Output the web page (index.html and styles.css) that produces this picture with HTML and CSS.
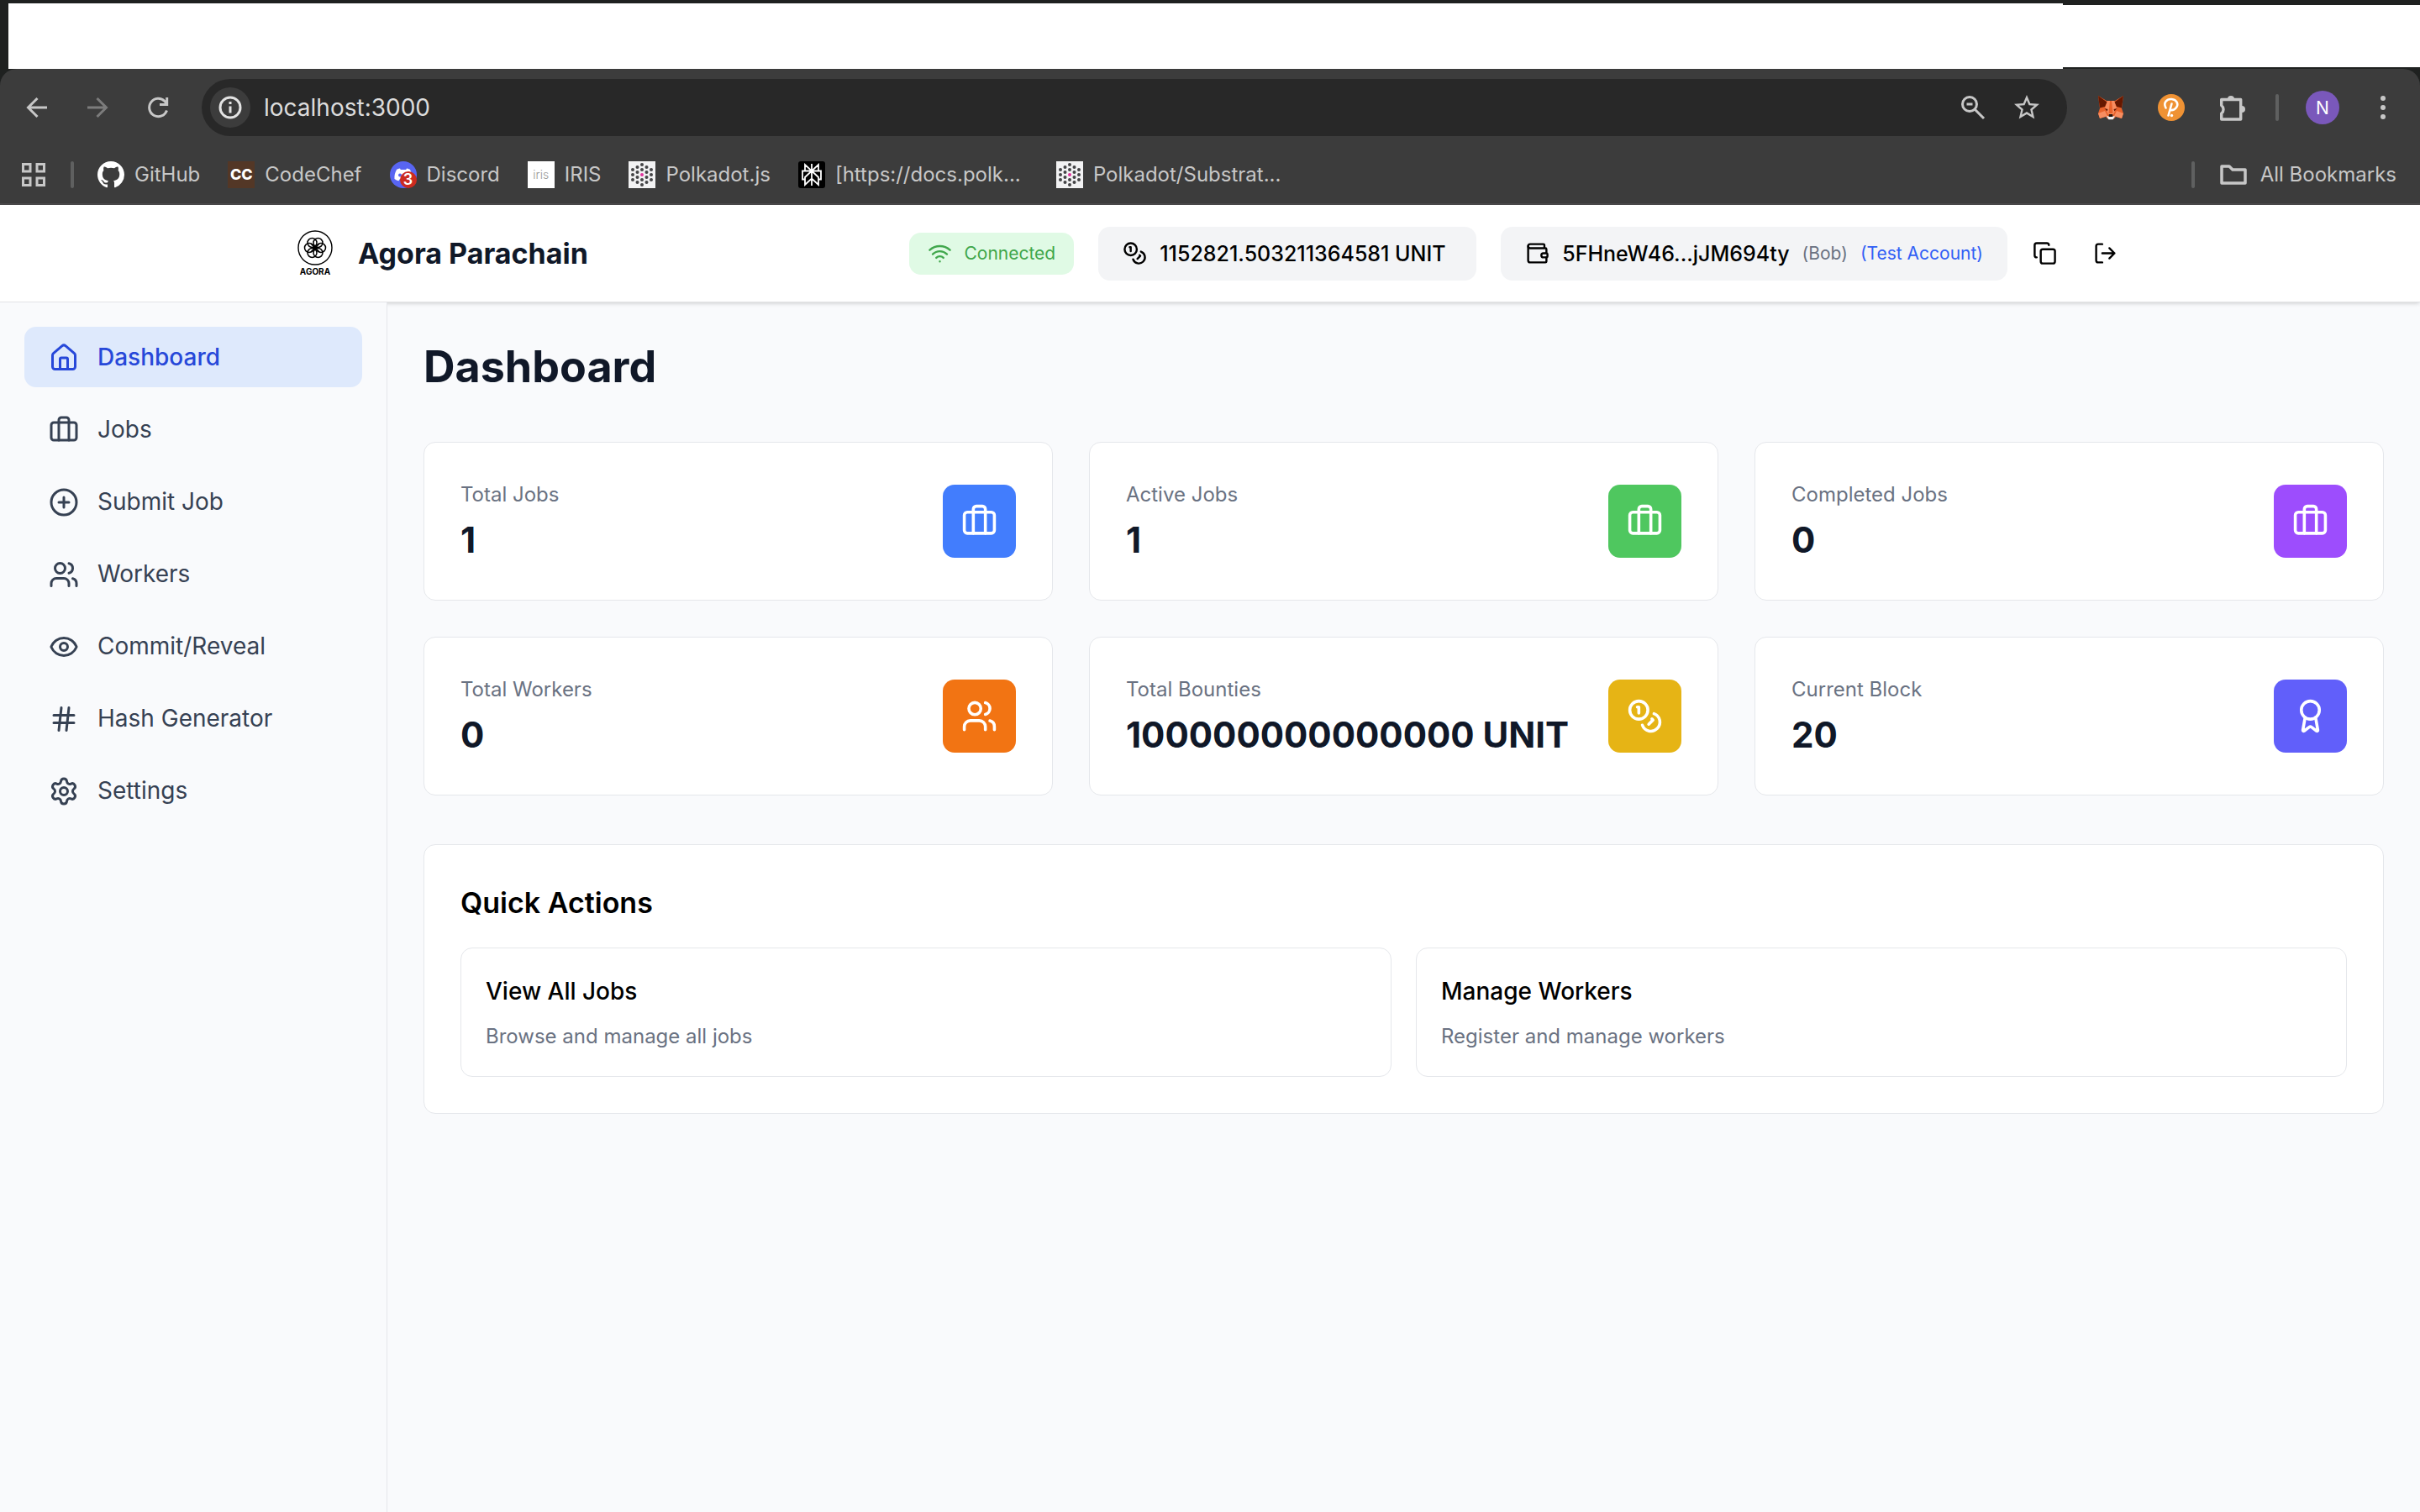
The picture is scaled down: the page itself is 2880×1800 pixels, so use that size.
FILE: index.html
```html
<!DOCTYPE html>
<html lang="en">
<head>
<meta charset="utf-8">
<title>Agora Parachain</title>
<link rel="stylesheet" href="styles.css">
</head>
<body>
<svg class="sprite" aria-hidden="true">
  <symbol id="i-home" viewBox="0 0 24 24"><path d="M15 21v-8a1 1 0 0 0-1-1h-4a1 1 0 0 0-1 1v8"/><path d="M3 10a2 2 0 0 1 .709-1.528l7-5.999a2 2 0 0 1 2.582 0l7 5.999A2 2 0 0 1 21 10v9a2 2 0 0 1-2 2H5a2 2 0 0 1-2-2z"/></symbol>
  <symbol id="i-briefcase" viewBox="0 0 24 24"><path d="M16 20V4a2 2 0 0 0-2-2h-4a2 2 0 0 0-2 2v16"/><rect width="20" height="14" x="2" y="6" rx="2"/></symbol>
  <symbol id="i-plus" viewBox="0 0 24 24"><circle cx="12" cy="12" r="10"/><path d="M8 12h8M12 8v8"/></symbol>
  <symbol id="i-users" viewBox="0 0 24 24"><path d="M16 21v-2a4 4 0 0 0-4-4H6a4 4 0 0 0-4 4v2"/><circle cx="9" cy="7" r="4"/><path d="M22 21v-2a4 4 0 0 0-3-3.87M16 3.13a4 4 0 0 1 0 7.75"/></symbol>
  <symbol id="i-eye" viewBox="0 0 24 24"><path d="M2.062 12.348a1 1 0 0 1 0-.696 10.75 10.75 0 0 1 19.876 0 1 1 0 0 1 0 .696 10.75 10.75 0 0 1-19.876 0"/><circle cx="12" cy="12" r="3"/></symbol>
  <symbol id="i-hash" viewBox="0 0 24 24"><path d="M4 9h16M4 15h16M10 3 8 21M16 3l-2 18"/></symbol>
  <symbol id="i-settings" viewBox="0 0 24 24"><path d="M9.671 4.136a2.34 2.34 0 0 1 4.659 0 2.34 2.34 0 0 0 3.319 1.915 2.34 2.34 0 0 1 2.33 4.033 2.34 2.34 0 0 0 0 3.831 2.34 2.34 0 0 1-2.33 4.033 2.34 2.34 0 0 0-3.319 1.915 2.34 2.34 0 0 1-4.659 0 2.34 2.34 0 0 0-3.32-1.915 2.34 2.34 0 0 1-2.33-4.033 2.34 2.34 0 0 0 0-3.831A2.34 2.34 0 0 1 6.35 6.051a2.34 2.34 0 0 0 3.319-1.915"/><circle cx="12" cy="12" r="3"/></symbol>
  <symbol id="i-coins" viewBox="0 0 24 24"><circle cx="8" cy="8" r="6"/><path d="M18.09 10.37A6 6 0 1 1 10.34 18M7 6h1v4M16.71 13.88l.7.71-2.82 2.82"/></symbol>
  <symbol id="i-award" viewBox="0 0 24 24"><path d="m15.477 12.89 1.515 8.526a.5.5 0 0 1-.81.47l-3.58-2.687a1 1 0 0 0-1.197 0l-3.586 2.686a.5.5 0 0 1-.81-.469l1.514-8.526"/><circle cx="12" cy="8" r="6"/></symbol>
  <symbol id="i-wifi" viewBox="0 0 24 24"><path d="M12 20h.01M2 8.82a15 15 0 0 1 20 0M5 12.859a10 10 0 0 1 14 0M8.5 16.429a5 5 0 0 1 7 0"/></symbol>
  <symbol id="i-wallet" viewBox="0 0 24 24"><path d="M19 7V4a1 1 0 0 0-1-1H5a2 2 0 0 0 0 4h15a1 1 0 0 1 1 1v4h-3a2 2 0 0 0 0 4h3a1 1 0 0 0 1-1v-2a1 1 0 0 0-1-1"/><path d="M3 5v14a2 2 0 0 0 2 2h15a1 1 0 0 0 1-1v-4"/></symbol>
  <symbol id="i-copy" viewBox="0 0 24 24"><rect width="14" height="14" x="8" y="8" rx="2"/><path d="M4 16c-1.1 0-2-.9-2-2V4c0-1.1.9-2 2-2h10c1.1 0 2 .9 2 2"/></symbol>
  <symbol id="i-logout" viewBox="0 0 24 24"><path d="m16 17 5-5-5-5M21 12H9M9 21H5a2 2 0 0 1-2-2V5a2 2 0 0 1 2-2h4"/></symbol>
  <symbol id="i-dots" viewBox="0 0 32 32"><path fill="#f2f2f3" d="M0 0h32v32H0z"/><g fill="#444446"><circle cx="16" cy="4" r="2"/><circle cx="10.500" cy="7" r="2"/><circle cx="21.500" cy="7" r="2"/><circle cx="5" cy="10" r="2"/><circle cx="16" cy="10" r="2"/><circle cx="27" cy="10" r="2"/><circle cx="10.500" cy="13" r="2"/><circle cx="21.500" cy="13" r="2"/><circle cx="5" cy="16" r="2"/><circle cx="27" cy="16" r="2"/><circle cx="10.500" cy="19" r="2"/><circle cx="21.500" cy="19" r="2"/><circle cx="5" cy="22" r="2"/><circle cx="16" cy="22" r="2"/><circle cx="27" cy="22" r="2"/><circle cx="10.500" cy="25" r="2"/><circle cx="21.500" cy="25" r="2"/><circle cx="16" cy="28" r="2"/></g><circle cx="16" cy="16" r="2" fill="#e0339c"/></symbol>
</svg>

<div class="browser">
  <div class="tabstrip"><div class="tabs"></div><div class="tabs-end"></div></div>
  <div class="chrome">
    <div class="toolbar">
      <div class="nav-buttons">
        <button class="tool" aria-label="Back"><svg class="tool-icon" viewBox="0 0 32 32"><path d="M28 16H6M16.500 5 5.500 16l11 11"/></svg></button>
        <button class="tool dim" aria-label="Forward"><svg class="tool-icon" viewBox="0 0 32 32"><path d="M4 16h22M15.500 5l11 11-11 11"/></svg></button>
        <button class="tool" aria-label="Reload"><svg class="tool-icon" viewBox="0 0 32 32"><path d="M26.500 19.500A10.700 10.700 0 1 1 24 8.500l2.500 3M26.700 4v8.500H18"/></svg></button>
      </div>
      <div class="address">
        <button class="site-info" aria-label="Site information"><svg class="tool-icon" viewBox="0 0 32 32"><circle cx="16" cy="16" r="12"/><path d="M16 14.500v8M16 9v3"/></svg></button>
        <input class="url" type="text" value="localhost:3000" aria-label="Address">
        <button class="address-tool" aria-label="Zoom"><svg class="tool-icon" viewBox="0 0 32 32"><circle cx="12" cy="12" r="8.500"/><path d="m18 18 11 11M8.500 12h7"/></svg></button>
        <button class="address-tool" aria-label="Bookmark this tab"><svg class="star" viewBox="0 0 24 24"><path d="M22 9.240l-7.190-.62L12 2 9.190 8.630 2 9.240l5.460 4.730L5.820 21 12 17.270 18.180 21l-1.630-7.030L22 9.240zM12 15.400l-3.760 2.270 1-4.280-3.320-2.880 4.380-.38L12 6.100l1.710 4.040 4.380.38-3.320 2.880 1 4.280L12 15.400z"/></svg></button>
      </div>
      <div class="nav-buttons">
        <button class="tool" aria-label="MetaMask"><svg class="ext" viewBox="0 0 32 32"><path fill="#e8622b" d="M1 2l10 6h10l10-6-2 15 2 6-2 6-7-2-3 3h-6l-3-3-7 2-2-6 2-6z"/><path fill="#661800" d="M1 2 11.500 9.500 9 15l-6 1.500zM31 2 20.500 9.500 23 15l6 1.500z"/><path fill="#f78d60" d="M12 8h8l3 9-4 7h-6l-4-7zM1 23l8-3 3 6-9 3zM31 23l-8-3-3 6 9 3z"/><path fill="#e8622b" d="M15 8h2l1.500 15h-5z"/><path fill="#661800" d="m8.500 17 4 1-1 2.500zM23.500 17l-4 1 1 2.500z"/><path fill="#f0f0f0" d="m11 26.500 3-.5h4l3 .5-2.500 3.800h-5z"/><path fill="#26150e" d="M14 24h4l.5 3h-5z"/></svg></button>
        <button class="tool" aria-label="Wallet extension"><svg class="ext" viewBox="0 0 32 32"><circle cx="16" cy="16" r="16" fill="#ef9234"/><path fill="none" stroke="#fff" stroke-width="2.600" stroke-linecap="round" d="M9.500 16.500C6 10 11 5.500 16.500 6c6 .5 8.500 6 5.500 10-1.800 2.600-4.500 3.500-7.500 3M16.500 11.500 12.500 25.500"/><circle cx="16.500" cy="25.500" r="1.700" fill="#fff"/></svg></button>
        <button class="tool" aria-label="Extensions"><svg class="ext" viewBox="0 0 32 32"><path fill="none" stroke="#c7c7c7" stroke-width="3.400" stroke-linejoin="round" d="M3.700 6.500h23v23.500h-23v-7a6 6 0 0 0 0-9.500z"/><path fill="#c7c7c7" d="M11 6a4 4 0 0 1 8 0zM28 14a4 4 0 0 1 0 8z"/></svg></button>
        <span class="divider"></span>
        <button class="tool" aria-label="Profile"><span class="avatar">N</span></button>
        <button class="tool" aria-label="Menu"><svg class="ext" viewBox="0 0 32 32"><g fill="#c7c7c7"><circle cx="16" cy="5" r="3"/><circle cx="16" cy="16" r="3"/><circle cx="16" cy="27" r="3"/></g></svg></button>
      </div>
    </div>
    <nav class="bookmarks" aria-label="Bookmarks">
      <button class="apps" aria-label="Tab groups"><svg class="tool-icon" viewBox="0 0 32 32"><path d="M3.500 3.500h8.500v8.500H3.500zM20 3.500h8.500v8.500H20zM3.500 20h8.500v8.500H3.500zM20 20h8.500v8.500H20z"/></svg></button>
      <span class="divider"></span>
      <a class="bookmark" href="#"><svg class="ext" viewBox="0 0 16 16"><path fill="#fff" d="M8 0C3.580 0 0 3.580 0 8c0 3.540 2.290 6.530 5.470 7.590.4.070.55-.17.55-.38 0-.19-.01-.82-.01-1.490-2.010.37-2.530-.49-2.690-.94-.09-.23-.48-.94-.82-1.130-.28-.15-.68-.52-.01-.53.63-.01 1.080.58 1.230.82.72 1.210 1.870.87 2.330.66.070-.52.28-.87.51-1.070-1.780-.2-3.640-.89-3.640-3.950 0-.87.31-1.590.82-2.150-.08-.2-.36-1.020.08-2.120 0 0 .67-.21 2.200.82.64-.18 1.320-.27 2-.27.68 0 1.360.09 2 .27 1.530-1.040 2.200-.82 2.200-.82.44 1.100.16 1.920.08 2.120.51.56.82 1.270.82 2.150 0 3.070-1.870 3.750-3.650 3.950.29.25.54.73.54 1.480 0 1.070-.01 1.930-.01 2.200 0 .21.15.46.55.38A8.013 8.013 0 0 0 16 8c0-4.420-3.580-8-8-8z"/></svg><span>GitHub</span></a>
      <a class="bookmark" href="#"><span class="favicon codechef" aria-hidden="true">CC</span><span>CodeChef</span></a>
      <a class="bookmark" href="#"><span class="favicon discord"><svg class="ext" viewBox="0 0 32 32"><circle cx="16" cy="16" r="16" fill="#5865f2"/><path fill="#fff" d="M12 8.500c-2 .3-3.500 1-4 1.500-2 3.500-2.800 7-2.500 11 1.500 1.200 3.300 2 5 2.300l1.200-2h8.600l1.200 2c1.700-.3 3.500-1.100 5-2.300.3-4-.5-7.500-2.500-11-.5-.5-2-1.200-4-1.500l-.8 1.500h-6.400z"/><circle cx="12" cy="16.500" r="2" fill="#5865f2"/></svg><span class="count">3</span></span><span>Discord</span></a>
      <a class="bookmark" href="#"><span class="favicon iris" aria-hidden="true">iris</span><span>IRIS</span></a>
      <a class="bookmark" href="#"><svg class="ext"><use href="#i-dots"/></svg><span>Polkadot.js</span></a>
      <a class="bookmark" href="#"><svg class="ext" viewBox="0 0 32 32"><rect width="32" height="32" rx="3"/><path fill="none" stroke="#fff" stroke-width="1.800" d="M16 3v26M8 4v7.500h16V4l-8 7.500zM16 11.500l-8 7.500v9l8-7.500 8 7.500v-9zM8 21.500H5v-10h22v10h-3"/></svg><span class="clipped">[https://docs.polk...</span></a>
      <a class="bookmark" href="#"><svg class="ext"><use href="#i-dots"/></svg><span>Polkadot/Substrat...</span></a>
      <span class="divider push"></span>
      <a class="bookmark all" href="#"><svg class="ext" viewBox="0 0 32 32"><path fill="none" stroke="#c7c7c7" stroke-width="3.500" stroke-linejoin="round" d="M2 6h9l4 4h15v16H2z"/></svg><span>All Bookmarks</span></a>
    </nav>
  </div>
</div>

<header class="header">
  <div class="header-inner">
    <div class="brand">
      <svg class="logo" viewBox="0 0 58 58" role="img" aria-label="Agora">
        <g fill="none" stroke="#000">
          <circle cx="29" cy="22" r="20" stroke-width="1.400"/>
          <g stroke-width="1.500"><circle cx="36" cy="22" r="5.500"/><circle cx="32.500" cy="28" r="5.500"/><circle cx="25.500" cy="28" r="5.500"/><circle cx="22" cy="22" r="5.500"/><circle cx="25.500" cy="16" r="5.500"/><circle cx="32.500" cy="16" r="5.500"/><path d="m24 17 10 10M34 17 24 27"/></g>
        </g>
        <text class="logo-text" x="29" y="54" text-anchor="middle">AGORA</text>
      </svg>
      <span class="brand-name">Agora Parachain</span>
    </div>
    <div class="account">
      <div class="status"><svg class="icon-sm"><use href="#i-wifi"/></svg><span>Connected</span></div>
      <div class="pill balance"><svg class="icon-sm"><use href="#i-coins"/></svg><span>1152821.503211364581 UNIT</span></div>
      <div class="pill"><svg class="icon-sm"><use href="#i-wallet"/></svg><span>5FHneW46...jJM694ty</span><span class="owner">(Bob)</span><span class="owner test">(Test Account)</span></div>
      <div class="actions">
        <button class="icon-button" aria-label="Copy address"><svg class="icon-sm"><use href="#i-copy"/></svg></button>
        <button class="icon-button" aria-label="Disconnect"><svg class="icon-sm"><use href="#i-logout"/></svg></button>
      </div>
    </div>
  </div>
</header>

<div class="layout">
  <aside class="sidebar">
    <nav class="menu" aria-label="Main">
      <a class="menu-item active" href="#" aria-current="page"><svg class="icon-md"><use href="#i-home"/></svg><span>Dashboard</span></a>
      <a class="menu-item" href="#"><svg class="icon-md"><use href="#i-briefcase"/></svg><span>Jobs</span></a>
      <a class="menu-item" href="#"><svg class="icon-md"><use href="#i-plus"/></svg><span>Submit Job</span></a>
      <a class="menu-item" href="#"><svg class="icon-md"><use href="#i-users"/></svg><span>Workers</span></a>
      <a class="menu-item" href="#"><svg class="icon-md"><use href="#i-eye"/></svg><span>Commit/Reveal</span></a>
      <a class="menu-item" href="#"><svg class="icon-md"><use href="#i-hash"/></svg><span>Hash Generator</span></a>
      <a class="menu-item" href="#"><svg class="icon-md"><use href="#i-settings"/></svg><span>Settings</span></a>
    </nav>
  </aside>
  <main class="main">
    <h1 class="title">Dashboard</h1>
    <section class="stats">
      <article class="card stat"><div><p class="label">Total Jobs</p><p class="value">1</p></div><span class="badge blue"><svg class="icon-lg"><use href="#i-briefcase"/></svg></span></article>
      <article class="card stat"><div><p class="label">Active Jobs</p><p class="value">1</p></div><span class="badge green"><svg class="icon-lg"><use href="#i-briefcase"/></svg></span></article>
      <article class="card stat"><div><p class="label">Completed Jobs</p><p class="value">0</p></div><span class="badge purple"><svg class="icon-lg"><use href="#i-briefcase"/></svg></span></article>
      <article class="card stat"><div><p class="label">Total Workers</p><p class="value">0</p></div><span class="badge orange"><svg class="icon-lg"><use href="#i-users"/></svg></span></article>
      <article class="card stat"><div><p class="label">Total Bounties</p><p class="value">100000000000000 UNIT</p></div><span class="badge yellow"><svg class="icon-lg"><use href="#i-coins"/></svg></span></article>
      <article class="card stat"><div><p class="label">Current Block</p><p class="value">20</p></div><span class="badge indigo"><svg class="icon-lg"><use href="#i-award"/></svg></span></article>
    </section>
    <section class="card quick">
      <h2 class="quick-title">Quick Actions</h2>
      <div class="quick-grid">
        <a class="action" href="#"><h3 class="action-title">View All Jobs</h3><p class="label">Browse and manage all jobs</p></a>
        <a class="action" href="#"><h3 class="action-title">Manage Workers</h3><p class="label">Register and manage workers</p></a>
      </div>
    </section>
  </main>
</div>
</body>
</html>
```
FILE: styles.css
```css
*, *::before, *::after { box-sizing: border-box; }

body {
  margin: 0;
  min-height: 100vh;
  display: flex;
  flex-direction: column;
  background: #f9fafc;
  color: #000;
  font-family: Inter, "Liberation Sans", sans-serif;
}

h1, h2, h3, p { margin: 0; }
a { color: inherit; text-decoration: none; }
button { border: 0; padding: 0; background: none; color: inherit; font: inherit; }
svg { display: block; flex: none; }

.sprite { position: absolute; width: 0; height: 0; }

/* Browser window */
.browser { background: #1f2120; }
.tabstrip { display: flex; height: 82px; padding: 4px 0 0 10px; }
.tabs { flex: 1; background: #fff; }
.tabs-end { width: 425px; margin: 2px 0; background: #fff; }

.chrome {
  background: #3c3c3c;
  border-bottom: 2px solid #4a494a;
  border-radius: 20px 20px 0 0;
  color: #c7c7c7;
}

.toolbar { display: flex; align-items: center; gap: 24px; padding: 12px 16px; }
.nav-buttons { display: flex; align-items: center; gap: 16px; }
.nav-buttons .divider { margin: 0 8px; }
.tool { display: grid; place-items: center; width: 56px; height: 56px; border-radius: 28px; }
.tool-icon { width: 32px; height: 32px; fill: none; stroke: currentColor; stroke-width: 3; }
.dim { color: #7c7c7c; }
.ext { width: 32px; height: 32px; }
.star { width: 36px; height: 36px; fill: currentColor; }

.address {
  flex: 1;
  display: flex;
  align-items: center;
  gap: 16px;
  height: 68px;
  padding: 0 24px 0 10px;
  border-radius: 34px;
  background: #282828;
}
.site-info { display: grid; place-items: center; width: 48px; height: 48px; border-radius: 24px; background: #3c3c3c; color: #e3e3e3; }
.url { flex: 1; min-width: 0; border: 0; padding: 0; background: none; color: #dcdcdc; font: 28px/40px Inter, "Liberation Sans", sans-serif; }
.address-tool { display: grid; place-items: center; width: 48px; height: 48px; }
.avatar { display: grid; place-items: center; width: 40px; height: 40px; border-radius: 20px; background: #7a58bb; color: #fff; font-size: 21px; }
.divider { width: 4px; height: 32px; border-radius: 2px; background: #5f6060; }

.bookmarks { display: flex; align-items: center; height: 68px; padding: 0 28px 0 24px; font-size: 24px; line-height: 32px; }
.apps { margin-right: 28px; }
.bookmark { display: flex; align-items: center; gap: 12px; margin-right: 5px; padding: 0 0 0 28px; white-space: nowrap; }
.clipped { width: 230px; }
.push { margin-left: auto; }
.all { margin: 0; padding-left: 30px; gap: 16px; }

.favicon { display: grid; place-items: center; width: 32px; height: 32px; line-height: 32px; }
.codechef { background: #533726; color: #fff; font-size: 18px; font-weight: 800; }
.iris { background: #fff; color: #999; font-size: 14px; font-weight: 300; }
.discord { position: relative; }
.count {
  position: absolute;
  right: 0;
  bottom: 0;
  width: 20px;
  height: 20px;
  border-radius: 10px;
  background: #cc2b20;
  color: #fff;
  font-size: 18px;
  font-weight: 600;
  line-height: 20px;
  text-align: center;
}

/* Stroked icons */
.icon-sm, .icon-md, .icon-lg {
  fill: none;
  stroke: currentColor;
  stroke-width: 2;
  stroke-linecap: round;
  stroke-linejoin: round;
}
.icon-sm { width: 29px; height: 29px; }
.icon-md { width: 36px; height: 36px; }
.icon-lg { width: 43px; height: 43px; }

/* App header */
.header {
  background: #fff;
  border-bottom: 1px solid #e2e3e6;
  box-shadow: 0 2px 5px rgba(0, 0, 0, 0.1), 0 2px 4px -2px rgba(0, 0, 0, 0.1);
}
.header-inner {
  display: flex;
  align-items: center;
  justify-content: space-between;
  max-width: 2304px;
  height: 115px;
  margin: 0 auto;
  padding: 0 58px;
}
.brand { display: flex; align-items: center; gap: 22px; }
.logo { width: 58px; height: 58px; }
.logo-text { font-size: 10px; font-weight: 700; }
.brand-name { color: #101828; font-size: 34px; font-weight: 700; line-height: 50px; }
.account { display: flex; align-items: center; gap: 29px; }
.status { display: flex; align-items: center; gap: 14px; padding: 7px 22px; border-radius: 14px; background: #e0fae5; color: #40a74c; font-size: 21px; line-height: 36px; }
.pill { display: flex; align-items: center; gap: 15px; padding: 14px 29px; border-radius: 14px; background: #f3f4f6; font-size: 25px; font-weight: 500; line-height: 36px; }
.balance { min-width: 450px; }
.owner { color: #6a7282; font-size: 21px; font-weight: 400; }
.test { color: #3160f5; }
.actions { display: flex; gap: 15px; margin-left: -13px; }
.icon-button { padding: 14px; border-radius: 14px; }

/* Page body */
.layout { flex: 1; display: flex; }
.sidebar { flex: none; width: 461px; background: #f9fafc; border-right: 1px solid #e5e7eb; }
.menu { display: flex; flex-direction: column; gap: 14px; padding: 29px; }
.menu-item { display: flex; align-items: center; gap: 22px; height: 72px; padding: 1px 29px 0; border-radius: 14px; color: #364153; font-size: 28px; line-height: 43px; }
.active { background: #dee9fc; color: #2748d9; font-weight: 500; }

.main { flex: 1; min-width: 0; padding: 44px 43px 43px; }
.title { margin-bottom: 57px; color: #101828; font-size: 52px; font-weight: 700; line-height: 65px; }
.card { background: #fff; border: 1px solid #e5e7eb; border-radius: 14px; padding: 43px; }
.stats { display: grid; grid-template-columns: repeat(3, 1fr); gap: 43px; }
.stat { display: flex; align-items: center; justify-content: space-between; }
.label { color: #6a7282; font-size: 24px; line-height: 38px; }
.value { margin-top: 7px; color: #101828; font-size: 42px; font-weight: 700; line-height: 56px; }
.badge { display: grid; place-items: center; width: 87px; height: 87px; border-radius: 14px; color: #fff; }
.blue { background: #427dfd; }
.green { background: #4fc75f; }
.purple { background: #9d4dfd; }
.orange { background: #f27413; }
.yellow { background: #e6b415; }
.indigo { background: #615ffa; }

.quick { margin-top: 58px; }
.quick-title { margin-bottom: 27px; font-size: 34px; font-weight: 600; line-height: 52px; }
.quick-grid { display: grid; grid-template-columns: repeat(2, 1fr); gap: 29px; }
.action { display: block; padding: 29px 29px 28px; border: 1px solid #e5e7eb; border-radius: 14px; }
.action-title { margin-bottom: 12px; font-size: 28px; font-weight: 500; line-height: 45px; }
```
